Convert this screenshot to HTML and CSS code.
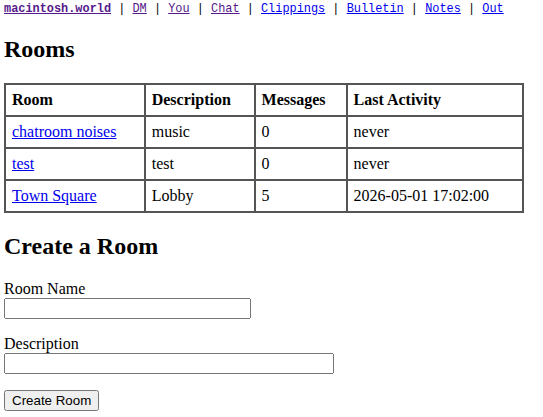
FILE: index.html
```html
<!DOCTYPE html>
<html lang="en">
<head>
  <meta charset="UTF-8">
  <meta name="viewport" content="width=device-width, initial-scale=1.0">
  <title>Rooms - macintosh.world</title>
  <link rel="stylesheet" href="styles.css">
</head>
<body>
  <nav class="topnav">
    <a href="#" class="visited home">macintosh.world</a> |
    <a href="#" class="visited">DM</a> |
    <a href="#" class="visited">You</a> |
    <a href="#" class="visited">Chat</a> |
    <a href="#">Clippings</a> |
    <a href="#">Bulletin</a> |
    <a href="#">Notes</a> |
    <a href="#">Out</a>
  </nav>

  <h2>Rooms</h2>
  <table class="rooms">
    <tr>
      <th>Room</th>
      <th>Description</th>
      <th>Messages</th>
      <th>Last Activity</th>
    </tr>
    <tr>
      <td><a href="#">chatroom noises</a></td>
      <td>music</td>
      <td>0</td>
      <td>never</td>
    </tr>
    <tr>
      <td><a href="#">test</a></td>
      <td>test</td>
      <td>0</td>
      <td>never</td>
    </tr>
    <tr>
      <td><a href="#">Town Square</a></td>
      <td>Lobby</td>
      <td>5</td>
      <td>2026-05-01 17:02:00</td>
    </tr>
  </table>

  <h2>Create a Room</h2>
  <form onsubmit="return false">
    <p>
      <label for="name">Room Name</label><br>
      <input type="text" id="name" class="field-name">
    </p>
    <p>
      <label for="desc">Description</label><br>
      <input type="text" id="desc" class="field-desc">
    </p>
    <p>
      <button type="submit">Create Room</button>
    </p>
  </form>
</body>
</html>
```

FILE: styles.css
```css
body {
  margin: 3px 4px 4px;
  font-family: "Liberation Serif", "Times New Roman", serif;
  font-size: 16px;
  color: #000;
  background: #fff;
}

a {
  color: #0000ee;
}

a.visited {
  color: #551a8b;
}

.topnav {
  font-family: "Liberation Mono", Consolas, monospace;
  font-size: 11.9px;
  line-height: 13px;
}

.topnav .home {
  font-weight: bold;
}

h2 {
  font-size: 24px;
}

.rooms {
  width: 520px;
  border-collapse: collapse;
}

.rooms th,
.rooms td {
  border: 2px solid #555;
  padding: 6px;
  text-align: left;
}

input,
button {
  font-family: "Liberation Sans", Arial, sans-serif;
  font-size: 13.33px;
}

input {
  box-sizing: border-box;
  height: 21px;
  vertical-align: top;
}

.field-name {
  width: 247px;
}

.field-desc {
  width: 330px;
}
```
